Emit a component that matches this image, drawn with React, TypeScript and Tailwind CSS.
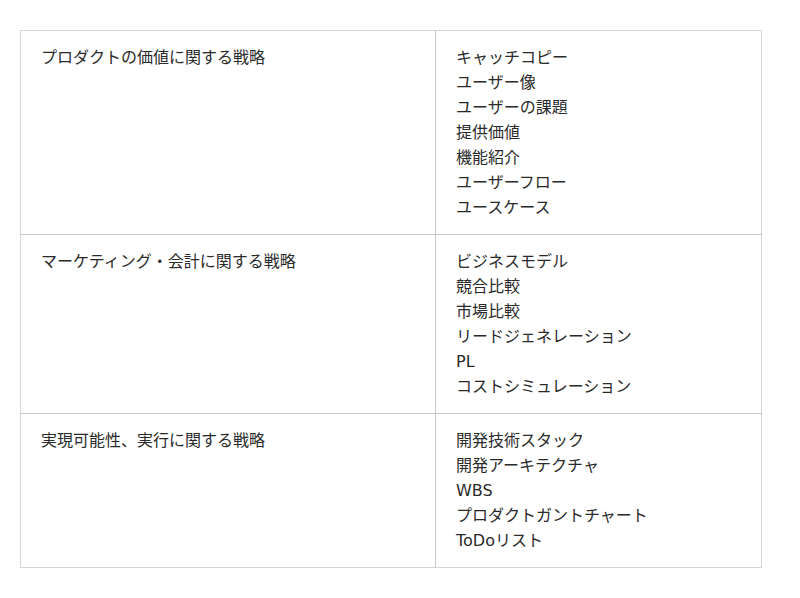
import React from 'react';

const rows = [
  {
    title: 'プロダクトの価値に関する戦略',
    items: ['キャッチコピー', 'ユーザー像', 'ユーザーの課題', '提供価値', '機能紹介', 'ユーザーフロー', 'ユースケース'],
  },
  {
    title: 'マーケティング・会計に関する戦略',
    items: ['ビジネスモデル', '競合比較', '市場比較', 'リードジェネレーション', 'PL', 'コストシミュレーション'],
  },
  {
    title: '実現可能性、実行に関する戦略',
    items: ['開発技術スタック', '開発アーキテクチャ', 'WBS', 'プロダクトガントチャート', 'ToDoリスト'],
  },
];

export default function App() {
  return (
    <div
      className="min-h-[598px] w-[800px] bg-white pl-[20px] pt-[30px] text-[#2a2a2a]"
      style={{ fontFamily: '"DejaVu Sans", "Noto Sans CJK JP", sans-serif' }}
    >
      <table className="w-[742px] border-collapse border border-[#d6d6d6] text-[16px] leading-[25px]">
        <tbody>
          {rows.map((row) => (
            <tr key={row.title} className="border-b border-[#c8c8c8] last:border-[#d6d6d6]">
              <td className="w-[415px] border-r border-[#c8c8c8] px-[20px] py-[14px] align-top">{row.title}</td>
              <td className="px-[20px] py-[14px] align-top">
                {row.items.map((item) => (
                  <div key={item}>{item}</div>
                ))}
              </td>
            </tr>
          ))}
        </tbody>
      </table>
    </div>
  );
}
